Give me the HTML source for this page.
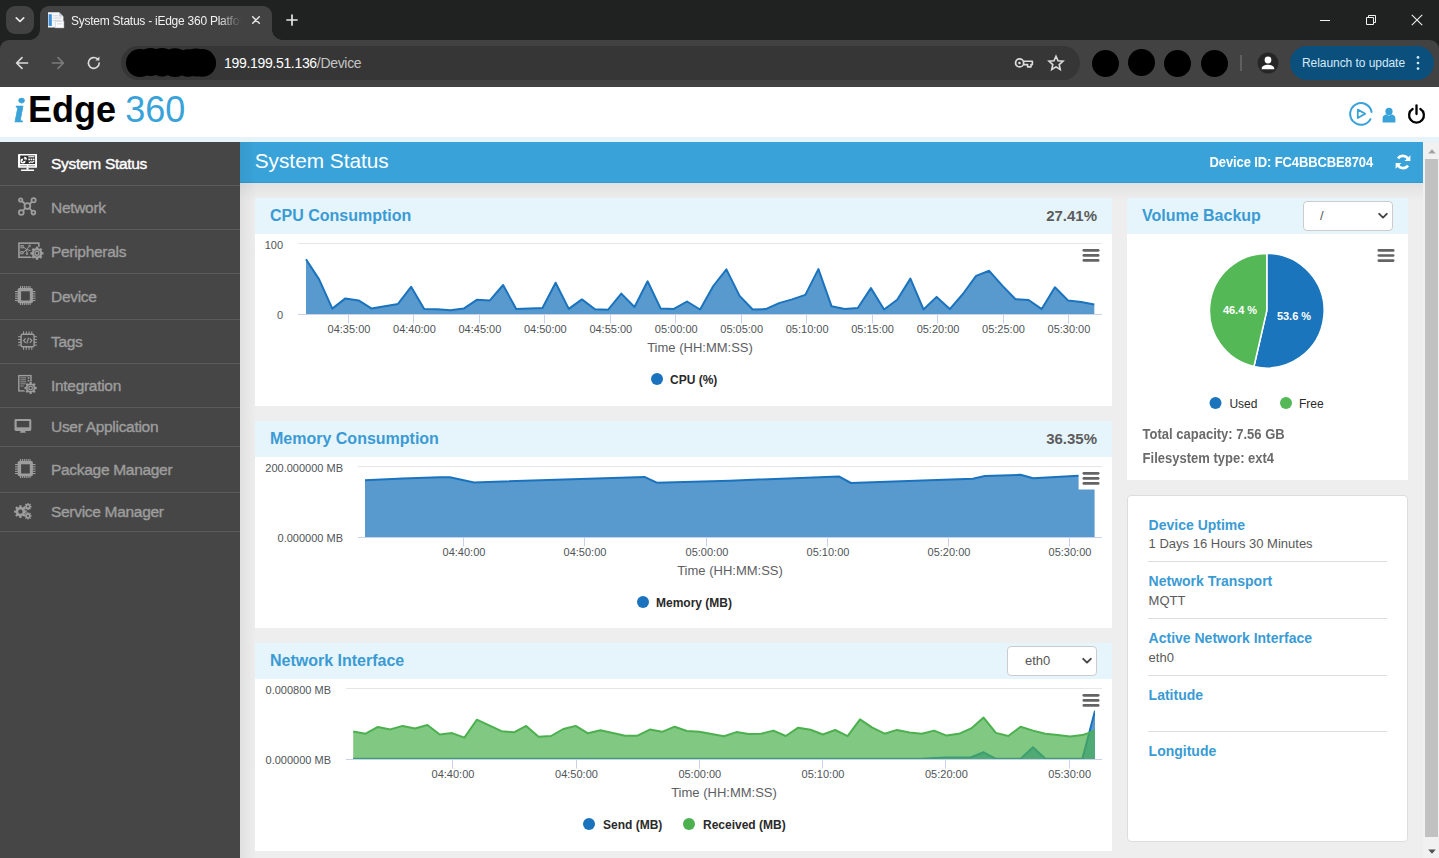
<!DOCTYPE html>
<html lang="en">
<head>
<meta charset="utf-8">
<title>System Status - iEdge 360 Platform</title>
<style>
*{box-sizing:border-box;margin:0;padding:0}
html,body{width:1439px;height:858px;overflow:hidden;background:#eee;font-family:"Liberation Sans",Arial,sans-serif}
.abs{position:absolute}
#root{position:relative;width:1439px;height:858px;overflow:hidden}
/* ---------- browser chrome ---------- */
#tabstrip{left:0;top:0;width:1439px;height:52px;background:#202222}
#toolbar{left:0;top:40px;width:1439px;height:47px;background:#424242;border-radius:9px 9px 0 0}
#tabdd{left:6px;top:6px;width:28px;height:28px;border-radius:9px;background:#424242}
#tab{left:40px;top:6px;width:232px;height:34px;background:#424242;border-radius:9px 9px 0 0}
#tab:before,#tab:after{content:"";position:absolute;bottom:0;width:10px;height:10px}
#tab:before{left:-10px;background:radial-gradient(circle at 0 0,transparent 9.5px,#424242 10px)}
#tab:after{right:-10px;background:radial-gradient(circle at 100% 0,transparent 9.5px,#424242 10px)}
#tabtxt{left:71px;top:13px;width:172px;height:16px;font-size:12px;line-height:16px;color:#f1f1f1;white-space:nowrap;overflow:hidden;letter-spacing:-.25px;-webkit-mask-image:linear-gradient(90deg,#000 148px,transparent 170px);mask-image:linear-gradient(90deg,#000 148px,transparent 170px)}
#omni{left:121px;top:46px;width:959px;height:34px;border-radius:17px;background:#363636}
#blob{left:126px;top:48px;width:90px;height:29px;border-radius:14px;background:#000}
#url{left:224px;top:54px;font-size:14px;line-height:18px;color:#fff;white-space:nowrap;letter-spacing:-.32px}
#url span{color:#c4c4c4}
.dot{width:27px;height:27px;border-radius:50%;background:#000;top:49px}
#relaunch{left:1290px;top:46px;width:144px;height:34px;border-radius:17px;background:#0b507d;color:#d3eafb;letter-spacing:-.06px;font-size:12px;line-height:34px;padding-left:12px;white-space:nowrap}
/* ---------- page ---------- */
#hdr{left:0;top:87px;width:1439px;height:50px;background:#fff}
#strip{left:0;top:137px;width:1439px;height:5px;background:#e6f3fb}
#logo{left:14.4px;top:88.8px;font-size:36px;line-height:42px;white-space:nowrap;color:#000;font-weight:bold}
#logo i{display:inline-block;font-family:"Liberation Serif",serif;font-style:italic;font-weight:bold;color:#39a3d9;font-size:34px;-webkit-text-stroke:.6px #39a3d9;transform:scaleX(1.12);transform-origin:left bottom;margin-right:4.2px}
#logo b{font-weight:normal;color:#39a3d9;margin-left:-.8px}
#side{left:0;top:142px;width:240px;height:716px;background:#464646}
.mi{left:0;width:240px;border-bottom:1px solid #5b5b5b;color:#9d9d9d;font-size:15.5px;letter-spacing:-.3px;white-space:nowrap}
.mi span{position:absolute;left:51px;top:50%;transform:translateY(-50%);line-height:20px;-webkit-text-stroke:.38px currentColor}
.mi.on{color:#fff}
.mi svg{position:absolute}
#main{left:240px;top:142px;width:1183px;height:716px;background:#eee}
#tbar{left:240px;top:142px;width:1183px;height:41px;background:#39a3d9;border-bottom:1px solid #2e9bd6}
#ttl{left:254.7px;top:148px;font-size:20.8px;line-height:26px;color:#fff;white-space:nowrap}
#devid{right:66px;top:155px;transform:scaleY(1.06);transform-origin:0 12.5px;letter-spacing:-.12px;font-size:13px;line-height:16px;font-weight:bold;color:#fff;white-space:nowrap}
.ph{background:#e6f4fc;height:36px}
.pb{background:#fff}
.pt{font-size:16px;font-weight:bold;color:#3a9bd4;line-height:20px;white-space:nowrap}
.pv{margin-top:1px;font-size:15px;font-weight:bold;color:#5c5c5c;line-height:20px;white-space:nowrap;text-align:right}
.sel{background:#fff;border:1px solid #ccc;border-radius:4px;font-size:13px;color:#555;line-height:28px;padding-left:17px}
#sb{left:1423px;top:142px;width:16px;height:716px;background:#f1f1f1}
#sbt{left:1425px;top:159px;width:13px;height:678px;background:#c1c1c1}
svg text{font-family:"Liberation Sans",Arial,sans-serif}
.info{left:1127px;top:495px;width:281px;height:347px;background:#fff;border:1px solid #ddd;border-radius:4px}
.il{left:1148.6px;font-size:14px;font-weight:bold;color:#3a9bd4;line-height:18px;white-space:nowrap}
.iv{left:1148.6px;margin-top:.5px;font-size:13px;color:#5a5a5a;line-height:18px;white-space:nowrap}
.hr{left:1148px;width:239px;height:1px;background:#ddd}
.cap{left:1142.6px;font-size:13px;font-weight:bold;color:#6a6a6a;line-height:16px;white-space:nowrap;transform:scaleY(1.06);transform-origin:0 12.5px}
</style>
</head>
<body>
<div id="root">
<!--CHROME-START-->
<div class="abs" id="tabstrip"></div>
<div class="abs" id="toolbar"></div>
<div class="abs" id="tabdd"><svg class="abs" style="left:9px;top:10px" width="10" height="8" viewBox="0 0 10 8"><path d="M1.3 1.8 L5 5.5 L8.7 1.8" fill="none" stroke="#e8e8e8" stroke-width="1.7" stroke-linecap="round" stroke-linejoin="round"/></svg></div>
<div class="abs" id="tab"></div>
<svg class="abs" style="left:47px;top:11px" width="18" height="18" viewBox="0 0 18 18">
 <path d="M1 1.2 H12 L16.4 5.4 V16.6 H1 Z" fill="#f4f6f8"/>
 <path d="M12 1.2 L16.4 5.4 H12 Z" fill="#c9d2da"/>
 <rect x="1.6" y="3.2" width="3.2" height="11.8" fill="#3f8fd6"/>
 <rect x="6.2" y="4.2" width="5" height="1" fill="#d3dae2"/><rect x="6.2" y="6.6" width="8" height="1" fill="#d3dae2"/><rect x="6.2" y="9" width="8" height="1" fill="#d3dae2"/>
 <rect x="8.6" y="10.4" width="8.2" height="6.4" fill="#fff" stroke="#d0d7de" stroke-width=".7"/>
 <rect x="10" y="12.4" width="5.4" height="1" fill="#d3dae2"/>
</svg>
<div class="abs" id="tabtxt">System Status - iEdge 360 Platform</div>
<svg class="abs" style="left:251px;top:15px" width="10" height="10" viewBox="0 0 10 10"><path d="M1.7 1.7 L8.3 8.3 M8.3 1.7 L1.7 8.3" stroke="#e6e6e6" stroke-width="1.5" stroke-linecap="round"/></svg>
<svg class="abs" style="left:286px;top:14px" width="12" height="12" viewBox="0 0 12 12"><path d="M6 1 V11 M1 6 H11" stroke="#e6e6e6" stroke-width="1.7" stroke-linecap="round"/></svg>
<svg class="abs" style="left:1319px;top:14px" width="12" height="12" viewBox="0 0 12 12"><path d="M1 6.5 H11" stroke="#f0f0f0" stroke-width="1"/></svg>
<svg class="abs" style="left:1365px;top:14px" width="12" height="12" viewBox="0 0 12 12"><path d="M1.5 3.5 H8.5 V10.5 H1.5 Z M3.5 3.5 V1.5 H10.5 V8.5 H8.5" fill="none" stroke="#f0f0f0" stroke-width="1"/></svg>
<svg class="abs" style="left:1411px;top:14px" width="12" height="12" viewBox="0 0 12 12"><path d="M.8 .8 L11.2 11.2 M11.2 .8 L.8 11.2" stroke="#f0f0f0" stroke-width="1.1"/></svg>
<!-- nav buttons -->
<svg class="abs" style="left:15px;top:56px" width="14" height="14" viewBox="0 0 14 14"><path d="M12.6 7 H2 M7 1.6 L1.6 7 L7 12.4" fill="none" stroke="#dcdcdc" stroke-width="1.6" stroke-linecap="round" stroke-linejoin="round"/></svg>
<svg class="abs" style="left:51px;top:56px" width="14" height="14" viewBox="0 0 14 14"><path d="M1.4 7 H12 M7 1.6 L12.4 7 L7 12.4" fill="none" stroke="#7c7c7c" stroke-width="1.6" stroke-linecap="round" stroke-linejoin="round"/></svg>
<svg class="abs" style="left:86px;top:55px" width="16" height="16" viewBox="0 0 16 16"><path d="M13.2 8 A5.4 5.4 0 1 1 11.4 3.9" fill="none" stroke="#dcdcdc" stroke-width="1.6" stroke-linecap="round"/><path d="M13.4 1.6 V5.6 H9.4 Z" fill="#dcdcdc"/></svg>
<div class="abs" id="omni"></div>
<svg class="abs" style="left:124px;top:46px" width="94" height="33" viewBox="124 46 94 33"><g fill="#000"><circle cx="140" cy="63" r="14.1"/><circle cx="150.5" cy="62" r="14.1"/><circle cx="162" cy="62.2" r="14.2"/><circle cx="175" cy="62.6" r="14.3"/><circle cx="188" cy="63" r="13.8"/><circle cx="196" cy="62.6" r="14"/><circle cx="202.3" cy="62.9" r="13.8"/></g></svg>
<div class="abs" id="url">199.199.51.136<span>/Device</span></div>
<svg class="abs" style="left:1014px;top:56px" width="21" height="14" viewBox="0 0 21 14"><circle cx="5.6" cy="6.9" r="4.05" fill="none" stroke="#dcdcdc" stroke-width="1.7"/><circle cx="5.5" cy="6.9" r="1.25" fill="#dcdcdc"/><path d="M9.8 5.2 H18.4 V8.6 H17 V10.9 H13.6 V8.6 H9.8" fill="none" stroke="#dcdcdc" stroke-width="1.6" stroke-linejoin="round"/></svg>
<svg class="abs" style="left:1047px;top:53.8px" width="18" height="18" viewBox="0 0 18 18"><path d="M9 2.2 L11 6.8 L16 7.25 L12.2 10.6 L13.3 15.5 L9 12.9 L4.7 15.5 L5.8 10.6 L2 7.25 L7 6.8 Z" fill="none" stroke="#dcdcdc" stroke-width="1.6" stroke-linejoin="miter"/></svg>
<div class="abs dot" style="left:1092px;top:50.2px"></div><div class="abs dot" style="left:1128px;top:48.8px"></div><div class="abs dot" style="left:1164px;top:50.2px"></div><div class="abs dot" style="left:1201px;top:50.2px"></div>
<div class="abs" style="left:1240px;top:55px;width:2px;height:16px;background:#5f5f5f"></div>
<svg class="abs" style="left:1257px;top:52px" width="22" height="22" viewBox="0 0 22 22"><circle cx="11" cy="11" r="10.5" fill="#262626"/><circle cx="11" cy="8" r="3.4" fill="#fff"/><path d="M4.7 16.4 C4.7 11.6 17.3 11.6 17.3 16.4 V17.3 H4.7 Z" fill="#fff"/></svg>
<div class="abs" id="relaunch">Relaunch to update</div>
<svg class="abs" style="left:1416px;top:55px" width="4" height="16" viewBox="0 0 4 16"><circle cx="2" cy="2.4" r="1.35" fill="#d3eafb"/><circle cx="2" cy="8" r="1.35" fill="#d3eafb"/><circle cx="2" cy="13.6" r="1.35" fill="#d3eafb"/></svg>
<!--CHROME-END-->
<!--PAGE-START-->
<div class="abs" id="hdr"></div>
<div class="abs" id="strip"></div>
<div class="abs" id="logo"><i>i</i>Edge <b>360</b></div>
<!-- header icons -->
<svg class="abs" style="left:1348px;top:101px" width="26" height="26" viewBox="0 0 26 26"><path d="M22.4 18.2 A10.8 10.8 0 1 1 23.6 11" fill="none" stroke="#39a3d9" stroke-width="2" stroke-linecap="round"/><path d="M9.8 8.6 V17 L17.2 12.8 Z" fill="none" stroke="#39a3d9" stroke-width="1.8" stroke-linejoin="round"/></svg>
<svg class="abs" style="left:1382px;top:107px" width="14" height="16" viewBox="0 0 14 16"><circle cx="7" cy="4.4" r="3.6" fill="#39a3d9"/><path d="M.6 15.4 V11.6 C.6 8 4 7.6 4.6 7.6 C6 8.8 8 8.8 9.4 7.6 C10 7.6 13.4 8 13.4 11.6 V15.4 Z" fill="#39a3d9"/></svg>
<svg class="abs" style="left:1407px;top:104px" width="19" height="20" viewBox="0 0 19 20"><path d="M5.6 5 A7.4 7.4 0 1 0 13.4 5" fill="none" stroke="#000" stroke-width="2.3" stroke-linecap="round"/><path d="M9.5 1.4 V10" stroke="#000" stroke-width="2.3" stroke-linecap="round"/></svg>
<!-- sidebar -->
<div class="abs" id="side"></div>
<!--MENU-START-->
<div class="abs mi on" style="top:142px;height:44px"><span>System Status</span></div>
<div class="abs mi" style="top:186px;height:44px"><span>Network</span></div>
<div class="abs mi" style="top:230px;height:44px"><span>Peripherals</span></div>
<div class="abs mi" style="top:274px;height:46px"><span>Device</span></div>
<div class="abs mi" style="top:320px;height:44px"><span>Tags</span></div>
<div class="abs mi" style="top:364px;height:44px"><span>Integration</span></div>
<div class="abs mi" style="top:408px;height:39px"><span>User Application</span></div>
<div class="abs mi" style="top:447px;height:46px"><span>Package Manager</span></div>
<div class="abs mi" style="top:493px;height:39px"><span>Service Manager</span></div>
<svg class="abs" style="left:17.9px;top:153.8px" width="19.4" height="17.2" viewBox="0 0 19.4 17.2"><rect x="0" y="0" width="19.2" height="13.7" rx=".7" fill="#fff"/><rect x="2.2" y="1.5" width="14.9" height="8.5" fill="#303030"/><rect x="2.2" y="11.5" width="6.7" height=".7" fill="#6a6a6a"/><rect x="10.3" y="11.5" width="6.8" height=".7" fill="#6a6a6a"/><circle cx="5" cy="7" r="2.5" fill="#fff"/><path d="M5 7 L5 4.5 A2.5 2.5 0 0 1 7.5 7 Z" fill="#303030"/><path d="M6.2 5.6 V2.7 A2.8 2.8 0 0 1 9 5.6 Z" fill="#fff"/><circle cx="4.7" cy="7.3" r=".9" fill="#555"/><rect x="10.3" y="2.2" width="6.2" height="1.1" fill="#fff"/><rect x="10.3" y="4.6" width="1.7" height="1.7" fill="#fff"/><rect x="12.55" y="4.6" width="1.7" height="1.7" fill="#fff"/><rect x="14.8" y="4.6" width="1.7" height="1.7" fill="#fff"/><path d="M10.8 8.9 L12.4 7.8 L14 8.3 L16.3 7.2" fill="none" stroke="#fff" stroke-width="1.2"/><rect x="8.5" y="13.6" width="2.1" height="2" fill="#fff"/><rect x="2.9" y="15.4" width="13.3" height="1.6" rx=".7" fill="#fff"/></svg>
<svg class="abs" style="left:16px;top:196px" width="23" height="22" viewBox="16 196 23 22"><g fill="none" stroke="#9d9d9d" stroke-width="1.8"><circle cx="27.4" cy="206.1" r="2.9"/><circle cx="20.7" cy="200" r="1.7"/><circle cx="33.6" cy="200.3" r="2.1"/><circle cx="21.3" cy="212.5" r="2.4"/><circle cx="33.4" cy="212.6" r="1.9"/><path d="M22.3 201.5 L25.2 204 M31.8 202 L29.6 204 M23.3 210.4 L25.3 208.2 M31.9 211 L29.6 208.2"/></g></svg>
<svg class="abs" style="left:17px;top:241px" width="28" height="21" viewBox="17 241 28 21"><rect x="18.95" y="243.15" width="19.9" height="14.1" fill="none" stroke="#9d9d9d" stroke-width="1.6"/><g fill="none" stroke="#9d9d9d" stroke-width="1"><rect x="21" y="245.6" width="2.2" height="2.2"/><rect x="20.8" y="251.6" width="2.2" height="2.2"/><circle cx="29.6" cy="245.8" r=".9"/><circle cx="27" cy="253.8" r=".9"/><path d="M23.2 246.8 L26.6 249.6 L29 246.4 M23 252.6 L26.6 249.6 L27 253 M26.6 249.6 L30.6 250.6"/></g><circle cx="37" cy="253.3" r="6.9" fill="#464646"/><path d="M42.05 252.05 L43.50 252.18 L43.50 254.42 L42.05 254.55 L41.45 255.98 L42.39 257.11 L40.81 258.69 L39.68 257.75 L38.25 258.35 L38.12 259.80 L35.88 259.80 L35.75 258.35 L34.32 257.75 L33.19 258.69 L31.61 257.11 L32.55 255.98 L31.95 254.55 L30.50 254.42 L30.50 252.18 L31.95 252.05 L32.55 250.62 L31.61 249.49 L33.19 247.91 L34.32 248.85 L35.75 248.25 L35.88 246.80 L38.12 246.80 L38.25 248.25 L39.68 248.85 L40.81 247.91 L42.39 249.49 L41.45 250.62 Z M33.90 253.30 a3.10 3.10 0 1 0 6.20 0 a3.10 3.10 0 1 0 -6.20 0 Z" fill="#9d9d9d" fill-rule="evenodd"/><circle cx="37" cy="253.3" r="1.9" fill="none" stroke="#9d9d9d" stroke-width="1.4"/></svg>
<svg class="abs" style="left:15px;top:285.7px" width="20.5" height="19.2" viewBox="0 0 20.5 19.2"><g fill="#9d9d9d"><rect x="0" y="5.00" width="20.5" height="1.1"/><rect x="0" y="7.25" width="20.5" height="1.1"/><rect x="0" y="9.50" width="20.5" height="1.1"/><rect x="0" y="11.75" width="20.5" height="1.1"/><rect x="0" y="14.00" width="20.5" height="1.1"/><rect x="5.00" y="0" width="1.05" height="19.2"/><rect x="6.90" y="0" width="1.05" height="19.2"/><rect x="8.80" y="0" width="1.05" height="19.2"/><rect x="10.70" y="0" width="1.05" height="19.2"/><rect x="12.60" y="0" width="1.05" height="19.2"/><rect x="14.50" y="0" width="1.05" height="19.2"/><rect x="2.7" y="2" width="15.2" height="15.2" rx="1.6"/></g><rect x="6.1" y="5.3" width="8.7" height="9.2" fill="#464646"/></svg>
<svg class="abs" style="left:17px;top:330px" width="21" height="21" viewBox="17 330 21 21"><g fill="#9d9d9d"><rect x="18.1" y="336.20" width="18.8" height="1.05"/><rect x="23.00" y="331.4" width="1.05" height="18.4"/><rect x="18.1" y="339.00" width="18.8" height="1.05"/><rect x="25.75" y="331.4" width="1.05" height="18.4"/><rect x="18.1" y="341.80" width="18.8" height="1.05"/><rect x="28.50" y="331.4" width="1.05" height="18.4"/><rect x="18.1" y="344.60" width="18.8" height="1.05"/><rect x="31.25" y="331.4" width="1.05" height="18.4"/></g><rect x="21.1" y="334.3" width="13" height="12.5" rx="1.6" fill="#464646" stroke="#9d9d9d" stroke-width="1.4"/><path d="M25.6 338.4 L23.6 340.6 L25.6 342.8 M29.8 338.4 L31.8 340.6 L29.8 342.8 M28.6 337.8 L26.8 343.4" fill="none" stroke="#9d9d9d" stroke-width="1.2"/></svg>
<svg class="abs" style="left:17px;top:374px" width="22" height="22" viewBox="17 374 22 22"><rect x="18.8" y="375.6" width="12.2" height="15.3" fill="none" stroke="#9d9d9d" stroke-width="1.4"/><g fill="#9d9d9d"><rect x="20.4" y="377.4" width="5.6" height=".9"/><rect x="20.4" y="379.4" width="5.6" height=".9"/><rect x="20.4" y="381.4" width="5.6" height=".9"/><rect x="20.4" y="383.4" width="5.6" height=".9"/><rect x="20.4" y="385.6" width="3.2" height=".9"/><rect x="27.6" y="377.2" width="1.8" height="1.6"/><rect x="27.6" y="380" width="1.8" height="1.6"/></g><circle cx="30.6" cy="388" r="6.6" fill="#464646"/><path d="M35.16 386.87 L36.71 386.95 L36.71 389.05 L35.16 389.13 L34.63 390.42 L35.66 391.58 L34.18 393.06 L33.02 392.03 L31.73 392.56 L31.65 394.11 L29.55 394.11 L29.47 392.56 L28.18 392.03 L27.02 393.06 L25.54 391.58 L26.57 390.42 L26.04 389.13 L24.49 389.05 L24.49 386.95 L26.04 386.87 L26.57 385.58 L25.54 384.42 L27.02 382.94 L28.18 383.97 L29.47 383.44 L29.55 381.89 L31.65 381.89 L31.73 383.44 L33.02 383.97 L34.18 382.94 L35.66 384.42 L34.63 385.58 Z M27.60 388.00 a3.00 3.00 0 1 0 6.00 0 a3.00 3.00 0 1 0 -6.00 0 Z" fill="#9d9d9d" fill-rule="evenodd"/><circle cx="30.6" cy="388" r="1.8" fill="none" stroke="#9d9d9d" stroke-width="1.3"/></svg>
<svg class="abs" style="left:14px;top:418px" width="18" height="16" viewBox="14 418 18 16"><rect x="14.5" y="419" width="16.8" height="11.9" rx="1.4" fill="#9d9d9d"/><rect x="16.7" y="421" width="12.5" height="6.3" fill="#464646"/><path d="M20.6 430.8 H25.2 L25.8 432.8 H20 Z" fill="#9d9d9d"/></svg>
<svg class="abs" style="left:15px;top:458.8px" width="20.5" height="19.2" viewBox="0 0 20.5 19.2"><g fill="#9d9d9d"><rect x="0" y="5.00" width="20.5" height="1.1"/><rect x="0" y="7.25" width="20.5" height="1.1"/><rect x="0" y="9.50" width="20.5" height="1.1"/><rect x="0" y="11.75" width="20.5" height="1.1"/><rect x="0" y="14.00" width="20.5" height="1.1"/><rect x="5.00" y="0" width="1.05" height="19.2"/><rect x="6.90" y="0" width="1.05" height="19.2"/><rect x="8.80" y="0" width="1.05" height="19.2"/><rect x="10.70" y="0" width="1.05" height="19.2"/><rect x="12.60" y="0" width="1.05" height="19.2"/><rect x="14.50" y="0" width="1.05" height="19.2"/><rect x="2.7" y="2" width="15.2" height="15.2" rx="1.6"/></g><rect x="6.1" y="5.3" width="8.7" height="9.2" fill="#464646"/></svg>
<svg class="abs" style="left:13px;top:502px" width="20" height="20" viewBox="13 502 20 20"><path d="M25.05 510.41 L26.70 510.48 L26.70 512.72 L25.05 512.79 L24.53 514.04 L25.65 515.26 L24.06 516.85 L22.84 515.73 L21.59 516.25 L21.52 517.90 L19.28 517.90 L19.21 516.25 L17.96 515.73 L16.74 516.85 L15.15 515.26 L16.27 514.04 L15.75 512.79 L14.10 512.72 L14.10 510.48 L15.75 510.41 L16.27 509.16 L15.15 507.94 L16.74 506.35 L17.96 507.47 L19.21 506.95 L19.28 505.30 L21.52 505.30 L21.59 506.95 L22.84 507.47 L24.06 506.35 L25.65 507.94 L24.53 509.16 Z M18.20 511.60 a2.20 2.20 0 1 0 4.40 0 a2.20 2.20 0 1 0 -4.40 0 Z" fill="#9d9d9d" fill-rule="evenodd"/><path d="M30.62 505.93 L31.64 505.95 L31.64 507.25 L30.62 507.27 L30.32 507.97 L31.03 508.72 L30.12 509.63 L29.37 508.92 L28.67 509.22 L28.65 510.24 L27.35 510.24 L27.33 509.22 L26.63 508.92 L25.88 509.63 L24.97 508.72 L25.68 507.97 L25.38 507.27 L24.36 507.25 L24.36 505.95 L25.38 505.93 L25.68 505.23 L24.97 504.48 L25.88 503.57 L26.63 504.28 L27.33 503.98 L27.35 502.96 L28.65 502.96 L28.67 503.98 L29.37 504.28 L30.12 503.57 L31.03 504.48 L30.32 505.23 Z M27.00 506.60 a1.00 1.00 0 1 0 2.00 0 a1.00 1.00 0 1 0 -2.00 0 Z" fill="#9d9d9d" fill-rule="evenodd"/><path d="M30.62 515.23 L31.64 515.25 L31.64 516.55 L30.62 516.57 L30.32 517.27 L31.03 518.02 L30.12 518.93 L29.37 518.22 L28.67 518.52 L28.65 519.54 L27.35 519.54 L27.33 518.52 L26.63 518.22 L25.88 518.93 L24.97 518.02 L25.68 517.27 L25.38 516.57 L24.36 516.55 L24.36 515.25 L25.38 515.23 L25.68 514.53 L24.97 513.78 L25.88 512.87 L26.63 513.58 L27.33 513.28 L27.35 512.26 L28.65 512.26 L28.67 513.28 L29.37 513.58 L30.12 512.87 L31.03 513.78 L30.32 514.53 Z M27.00 515.90 a1.00 1.00 0 1 0 2.00 0 a1.00 1.00 0 1 0 -2.00 0 Z" fill="#9d9d9d" fill-rule="evenodd"/></svg>
<!--MENU-END-->
<!-- main -->
<div class="abs" id="main"></div>
<div class="abs" style="left:240px;top:183px;width:1183px;height:18px;background:linear-gradient(#e2e2e2,#e7e7e7 40%,#ebebeb 75%,#eee)"></div>
<div class="abs" id="tbar"></div>
<div class="abs" style="left:240px;top:142px;width:17px;height:716px;background:linear-gradient(90deg,rgba(0,0,0,.06),rgba(0,0,0,.03) 45%,rgba(0,0,0,0))"></div>
<div class="abs" id="ttl">System Status</div>
<div class="abs" id="devid">Device ID: FC4BBCBE8704</div>
<svg class="abs" style="left:1395px;top:154px" width="16" height="16" viewBox="0 0 16 16"><path d="M13.6 6.2 A6 6 0 0 0 3 4.4" fill="none" stroke="#fff" stroke-width="2.7"/><path d="M2.4 9.8 A6 6 0 0 0 13 11.6" fill="none" stroke="#fff" stroke-width="2.7"/><path d="M15.4 1.2 V7 H9.6 Z" fill="#fff"/><path d="M.6 14.8 V9 H6.4 Z" fill="#fff"/></svg>
<!-- scrollbar -->
<div class="abs" id="sb"></div><div class="abs" id="sbt"></div>
<svg class="abs" style="left:1427.5px;top:149px" width="8" height="5" viewBox="0 0 8 5"><path d="M4 .3 L7.8 4.6 H.2 Z" fill="#a3a3a3"/></svg>
<svg class="abs" style="left:1427.5px;top:848.6px" width="8" height="5" viewBox="0 0 8 5"><path d="M4 4.7 L7.8 .4 H.2 Z" fill="#505050"/></svg>
<!-- panel 1 -->
<div class="abs ph" style="left:255px;top:198px;width:857px"></div>
<div class="abs pb" style="left:255px;top:234px;width:857px;height:172px"></div>
<div class="abs pt" style="left:270px;top:206px">CPU Consumption</div>
<div class="abs pv" style="left:997px;width:100px;top:205px">27.41%</div>
<!--CHART1-START-->
<svg class="abs" style="left:255px;top:234px" width="857" height="172" viewBox="255 234 857 172"><path d="M298 243.5 H1102" stroke="#e6e6e6" stroke-width="1"/><path d="M298 314.5 H1102" stroke="#c9d2ec" stroke-width="1"/><path d="M348.5 315 V323.5 M413.5 315 V323.5 M479.5 315 V323.5 M544.5 315 V323.5 M610.5 315 V323.5 M675.5 315 V323.5 M741.5 315 V323.5 M806.5 315 V323.5 M872.5 315 V323.5 M937.5 315 V323.5 M1003.5 315 V323.5 M1068.5 315 V323.5" stroke="#c9d2ec" stroke-width="1"/><path d="M306.0 314.0 L306.0 259.3 L319.1 279.4 L332.3 308.6 L345.4 298.4 L358.6 300.4 L371.7 308.6 L384.8 306.2 L398.0 303.9 L411.1 286.8 L424.2 309.1 L437.4 309.3 L450.5 310.3 L463.7 308.6 L476.8 299.8 L489.9 300.4 L503.1 285.0 L516.2 309.1 L529.4 308.6 L542.5 308.0 L555.6 282.7 L568.8 308.9 L581.9 299.4 L595.0 309.3 L608.2 309.7 L621.3 293.6 L634.5 307.0 L647.6 281.3 L660.7 308.6 L673.9 308.9 L687.0 301.5 L700.1 309.5 L713.3 286.0 L726.4 269.4 L739.6 295.9 L752.7 309.5 L765.8 309.1 L779.0 303.1 L792.1 299.4 L805.3 294.9 L818.4 269.1 L831.5 306.2 L844.7 308.9 L857.8 308.0 L870.9 288.1 L884.1 309.5 L897.2 299.8 L910.4 278.6 L923.5 309.5 L936.6 296.9 L949.8 309.1 L962.9 294.0 L976.1 275.9 L989.2 270.8 L1002.3 285.6 L1015.5 299.2 L1028.6 300.0 L1041.7 309.1 L1054.9 287.3 L1068.0 300.4 L1081.2 302.1 L1094.3 304.5 L1094.3 314.0 Z" fill="#1b75bc" fill-opacity="0.73"/><polyline points="306.0,259.3 319.1,279.4 332.3,308.6 345.4,298.4 358.6,300.4 371.7,308.6 384.8,306.2 398.0,303.9 411.1,286.8 424.2,309.1 437.4,309.3 450.5,310.3 463.7,308.6 476.8,299.8 489.9,300.4 503.1,285.0 516.2,309.1 529.4,308.6 542.5,308.0 555.6,282.7 568.8,308.9 581.9,299.4 595.0,309.3 608.2,309.7 621.3,293.6 634.5,307.0 647.6,281.3 660.7,308.6 673.9,308.9 687.0,301.5 700.1,309.5 713.3,286.0 726.4,269.4 739.6,295.9 752.7,309.5 765.8,309.1 779.0,303.1 792.1,299.4 805.3,294.9 818.4,269.1 831.5,306.2 844.7,308.9 857.8,308.0 870.9,288.1 884.1,309.5 897.2,299.8 910.4,278.6 923.5,309.5 936.6,296.9 949.8,309.1 962.9,294.0 976.1,275.9 989.2,270.8 1002.3,285.6 1015.5,299.2 1028.6,300.0 1041.7,309.1 1054.9,287.3 1068.0,300.4 1081.2,302.1 1094.3,304.5" fill="none" stroke="#1b73bd" stroke-width="2" stroke-linejoin="round" stroke-linecap="butt"/><text x="283" y="249" font-size="11" text-anchor="end" fill="#4f5457" font-weight="normal">100</text><text x="283" y="319" font-size="11" text-anchor="end" fill="#4f5457" font-weight="normal">0</text><text x="349" y="333" font-size="11" text-anchor="middle" fill="#4f5457" font-weight="normal">04:35:00</text><text x="414.45" y="333" font-size="11" text-anchor="middle" fill="#4f5457" font-weight="normal">04:40:00</text><text x="479.9" y="333" font-size="11" text-anchor="middle" fill="#4f5457" font-weight="normal">04:45:00</text><text x="545.35" y="333" font-size="11" text-anchor="middle" fill="#4f5457" font-weight="normal">04:50:00</text><text x="610.8" y="333" font-size="11" text-anchor="middle" fill="#4f5457" font-weight="normal">04:55:00</text><text x="676.25" y="333" font-size="11" text-anchor="middle" fill="#4f5457" font-weight="normal">05:00:00</text><text x="741.7" y="333" font-size="11" text-anchor="middle" fill="#4f5457" font-weight="normal">05:05:00</text><text x="807.15" y="333" font-size="11" text-anchor="middle" fill="#4f5457" font-weight="normal">05:10:00</text><text x="872.6" y="333" font-size="11" text-anchor="middle" fill="#4f5457" font-weight="normal">05:15:00</text><text x="938.05" y="333" font-size="11" text-anchor="middle" fill="#4f5457" font-weight="normal">05:20:00</text><text x="1003.5" y="333" font-size="11" text-anchor="middle" fill="#4f5457" font-weight="normal">05:25:00</text><text x="1068.95" y="333" font-size="11" text-anchor="middle" fill="#4f5457" font-weight="normal">05:30:00</text><text x="700" y="352" font-size="13" text-anchor="middle" fill="#5c6063" font-weight="normal">Time (HH:MM:SS)</text><circle cx="657" cy="379" r="6" fill="#1b73bd"/><text x="670" y="384" font-size="12" text-anchor="start" fill="#2a2a2a" font-weight="bold">CPU (%)</text><g fill="#646464"><rect x="1082.5" y="249" width="17" height="2.7" rx="1.35"/><rect x="1082.5" y="254.05" width="17" height="2.7" rx="1.35"/><rect x="1082.5" y="259.1" width="17" height="2.7" rx="1.35"/></g></svg>
<!--CHART1-END-->
<!-- panel 2 -->
<div class="abs ph" style="left:255px;top:420.5px;width:857px"></div>
<div class="abs pb" style="left:255px;top:456.5px;width:857px;height:171.5px"></div>
<div class="abs pt" style="left:270px;top:429px">Memory Consumption</div>
<div class="abs pv" style="left:997px;width:100px;top:428px">36.35%</div>
<!--CHART2-START-->
<svg class="abs" style="left:255px;top:456px" width="857" height="172" viewBox="255 456 857 172"><path d="M358 466.5 H1102" stroke="#e6e6e6" stroke-width="1"/><path d="M358 537.5 H1102" stroke="#c9d2ec" stroke-width="1"/><path d="M463.5 538 V546.5 M584.5 538 V546.5 M706.5 538 V546.5 M827.5 538 V546.5 M948.5 538 V546.5 M1069.5 538 V546.5" stroke="#c9d2ec" stroke-width="1"/><path d="M365.0 537.0 L365.0 480.3 L402.8 478.5 L439.8 477.2 L449.8 477.2 L474.1 482.4 L644.4 476.9 L656.8 482.7 L730.0 480.7 L838.8 476.4 L850.9 483.0 L972.9 478.7 L984.8 476.1 L1020.5 474.8 L1033.1 478.2 L1078.6 475.8 L1094.6 475.3 L1094.6 537.0 Z" fill="#1b75bc" fill-opacity="0.73"/><polyline points="365.0,480.3 402.8,478.5 439.8,477.2 449.8,477.2 474.1,482.4 644.4,476.9 656.8,482.7 730.0,480.7 838.8,476.4 850.9,483.0 972.9,478.7 984.8,476.1 1020.5,474.8 1033.1,478.2 1078.6,475.8 1094.6,475.3" fill="none" stroke="#1b73bd" stroke-width="2" stroke-linejoin="round" stroke-linecap="butt"/><rect x="1078.6" y="469" width="24" height="20.5" fill="#fff"/><text x="343" y="471.5" font-size="11" text-anchor="end" fill="#4f5457" font-weight="normal">200.000000 MB</text><text x="343" y="541.5" font-size="11" text-anchor="end" fill="#4f5457" font-weight="normal">0.000000 MB</text><text x="464" y="556" font-size="11" text-anchor="middle" fill="#4f5457" font-weight="normal">04:40:00</text><text x="585" y="556" font-size="11" text-anchor="middle" fill="#4f5457" font-weight="normal">04:50:00</text><text x="707" y="556" font-size="11" text-anchor="middle" fill="#4f5457" font-weight="normal">05:00:00</text><text x="828" y="556" font-size="11" text-anchor="middle" fill="#4f5457" font-weight="normal">05:10:00</text><text x="949" y="556" font-size="11" text-anchor="middle" fill="#4f5457" font-weight="normal">05:20:00</text><text x="1070" y="556" font-size="11" text-anchor="middle" fill="#4f5457" font-weight="normal">05:30:00</text><text x="730" y="575" font-size="13" text-anchor="middle" fill="#5c6063" font-weight="normal">Time (HH:MM:SS)</text><circle cx="643" cy="602" r="6" fill="#1b73bd"/><text x="656" y="607" font-size="12" text-anchor="start" fill="#2a2a2a" font-weight="bold">Memory (MB)</text><g fill="#646464"><rect x="1082.5" y="472" width="17" height="2.7" rx="1.35"/><rect x="1082.5" y="477.05" width="17" height="2.7" rx="1.35"/><rect x="1082.5" y="482.1" width="17" height="2.7" rx="1.35"/></g></svg>
<!--CHART2-END-->
<!-- panel 3 -->
<div class="abs ph" style="left:255px;top:643px;width:857px"></div>
<div class="abs pb" style="left:255px;top:679px;width:857px;height:172px"></div>
<div class="abs pt" style="left:270px;top:651px">Network Interface</div>
<div class="abs sel" style="left:1007px;top:646px;width:90px;height:30px">eth0</div>
<svg class="abs" style="left:1081.8px;top:657.4px" width="10" height="8" viewBox="0 0 10 8"><path d="M1.2 1.8 L5 5.6 L8.8 1.8" fill="none" stroke="#444" stroke-width="1.9" stroke-linecap="round" stroke-linejoin="round"/></svg>
<!--CHART3-START-->
<svg class="abs" style="left:255px;top:679px" width="857" height="172" viewBox="255 679 857 172"><path d="M346 688.5 H1102" stroke="#e6e6e6" stroke-width="1"/><path d="M346 759.5 H1102" stroke="#c9d2ec" stroke-width="1"/><path d="M452.5 760 V768.5 M576.5 760 V768.5 M699.5 760 V768.5 M822.5 760 V768.5 M945.5 760 V768.5 M1069.5 760 V768.5" stroke="#c9d2ec" stroke-width="1"/><clipPath id="cl3"><rect x="346" y="680" width="748.9" height="79"/></clipPath><g clip-path="url(#cl3)"><path d="M353.2 759.0 L353.2 758.8 L365.6 758.8 L377.9 758.8 L390.3 758.8 L402.6 758.8 L415.0 758.8 L427.4 758.8 L439.7 758.8 L452.1 758.8 L464.4 758.8 L476.8 758.8 L489.2 758.8 L501.5 758.8 L513.9 758.8 L526.2 758.8 L538.6 758.8 L551.0 758.8 L563.3 758.8 L575.7 758.8 L588.0 758.8 L600.4 758.8 L612.8 758.8 L625.1 758.8 L637.5 758.8 L649.8 758.8 L662.2 758.8 L674.6 758.8 L686.9 758.8 L699.3 758.8 L711.6 758.8 L724.0 758.8 L736.4 758.8 L748.7 758.8 L761.1 758.8 L773.4 758.8 L785.8 758.8 L798.2 758.8 L810.5 758.8 L822.9 758.8 L835.2 758.8 L847.6 758.8 L860.0 758.8 L872.3 758.8 L884.7 758.8 L897.0 758.8 L909.4 758.8 L921.8 758.8 L934.1 757.9 L946.5 757.6 L958.8 757.4 L971.2 757.3 L983.6 752.3 L995.9 758.8 L1008.3 758.8 L1020.6 758.8 L1033.0 747.2 L1045.4 758.8 L1057.7 758.8 L1070.1 758.8 L1082.4 758.8 L1094.8 711.6 L1098.0 711.6 L1098.0 759.0 Z" fill="#1b75bc" fill-opacity="0.73"/><polyline points="353.2,758.8 365.6,758.8 377.9,758.8 390.3,758.8 402.6,758.8 415.0,758.8 427.4,758.8 439.7,758.8 452.1,758.8 464.4,758.8 476.8,758.8 489.2,758.8 501.5,758.8 513.9,758.8 526.2,758.8 538.6,758.8 551.0,758.8 563.3,758.8 575.7,758.8 588.0,758.8 600.4,758.8 612.8,758.8 625.1,758.8 637.5,758.8 649.8,758.8 662.2,758.8 674.6,758.8 686.9,758.8 699.3,758.8 711.6,758.8 724.0,758.8 736.4,758.8 748.7,758.8 761.1,758.8 773.4,758.8 785.8,758.8 798.2,758.8 810.5,758.8 822.9,758.8 835.2,758.8 847.6,758.8 860.0,758.8 872.3,758.8 884.7,758.8 897.0,758.8 909.4,758.8 921.8,758.8 934.1,757.9 946.5,757.6 958.8,757.4 971.2,757.3 983.6,752.3 995.9,758.8 1008.3,758.8 1020.6,758.8 1033.0,747.2 1045.4,758.8 1057.7,758.8 1070.1,758.8 1082.4,758.8 1094.8,711.6 1098.0,711.6" fill="none" stroke="#1b73bd" stroke-width="2" stroke-linejoin="round" stroke-linecap="butt"/><path d="M353.2 759.0 L353.2 731.6 L365.6 733.7 L377.9 726.9 L390.3 729.4 L402.6 725.9 L415.0 728.5 L427.4 725.0 L439.7 734.5 L452.1 733.1 L464.4 737.6 L476.8 719.7 L489.2 725.3 L501.5 731.2 L513.9 732.3 L526.2 725.9 L538.6 736.8 L551.0 736.0 L563.3 729.0 L575.7 725.9 L588.0 733.3 L600.4 730.2 L612.8 732.9 L625.1 735.7 L637.5 735.7 L649.8 729.6 L662.2 731.8 L674.6 726.7 L686.9 731.0 L699.3 731.8 L711.6 734.1 L724.0 736.2 L736.4 732.1 L748.7 734.1 L761.1 733.7 L773.4 730.6 L785.8 736.0 L798.2 727.7 L810.5 729.8 L822.9 734.5 L835.2 730.0 L847.6 736.2 L860.0 719.4 L872.3 727.7 L884.7 733.7 L897.0 729.9 L909.4 732.6 L921.8 733.7 L934.1 730.6 L946.5 735.6 L958.8 733.8 L971.2 728.4 L983.6 717.6 L995.9 732.9 L1008.3 736.0 L1020.6 726.8 L1033.0 730.6 L1045.4 733.8 L1057.7 734.9 L1070.1 736.4 L1082.4 735.1 L1094.8 730.9 L1094.8 759.0 Z" fill="#4cb04f" fill-opacity="0.7"/><polyline points="353.2,731.6 365.6,733.7 377.9,726.9 390.3,729.4 402.6,725.9 415.0,728.5 427.4,725.0 439.7,734.5 452.1,733.1 464.4,737.6 476.8,719.7 489.2,725.3 501.5,731.2 513.9,732.3 526.2,725.9 538.6,736.8 551.0,736.0 563.3,729.0 575.7,725.9 588.0,733.3 600.4,730.2 612.8,732.9 625.1,735.7 637.5,735.7 649.8,729.6 662.2,731.8 674.6,726.7 686.9,731.0 699.3,731.8 711.6,734.1 724.0,736.2 736.4,732.1 748.7,734.1 761.1,733.7 773.4,730.6 785.8,736.0 798.2,727.7 810.5,729.8 822.9,734.5 835.2,730.0 847.6,736.2 860.0,719.4 872.3,727.7 884.7,733.7 897.0,729.9 909.4,732.6 921.8,733.7 934.1,730.6 946.5,735.6 958.8,733.8 971.2,728.4 983.6,717.6 995.9,732.9 1008.3,736.0 1020.6,726.8 1033.0,730.6 1045.4,733.8 1057.7,734.9 1070.1,736.4 1082.4,735.1 1094.8,730.9" fill="none" stroke="#4cb04f" stroke-width="2" stroke-linejoin="round" stroke-linecap="butt"/></g><text x="331" y="693.5" font-size="11" text-anchor="end" fill="#4f5457" font-weight="normal">0.000800 MB</text><text x="331" y="763.5" font-size="11" text-anchor="end" fill="#4f5457" font-weight="normal">0.000000 MB</text><text x="453" y="778" font-size="11" text-anchor="middle" fill="#4f5457" font-weight="normal">04:40:00</text><text x="576.5" y="778" font-size="11" text-anchor="middle" fill="#4f5457" font-weight="normal">04:50:00</text><text x="699.8" y="778" font-size="11" text-anchor="middle" fill="#4f5457" font-weight="normal">05:00:00</text><text x="823" y="778" font-size="11" text-anchor="middle" fill="#4f5457" font-weight="normal">05:10:00</text><text x="946.4" y="778" font-size="11" text-anchor="middle" fill="#4f5457" font-weight="normal">05:20:00</text><text x="1069.7" y="778" font-size="11" text-anchor="middle" fill="#4f5457" font-weight="normal">05:30:00</text><text x="724" y="797" font-size="13" text-anchor="middle" fill="#5c6063" font-weight="normal">Time (HH:MM:SS)</text><circle cx="589" cy="824" r="6" fill="#1b73bd"/><text x="603" y="829" font-size="12" text-anchor="start" fill="#2a2a2a" font-weight="bold">Send (MB)</text><circle cx="689" cy="824" r="6" fill="#4cb04f"/><text x="703" y="829" font-size="12" text-anchor="start" fill="#2a2a2a" font-weight="bold">Received (MB)</text><g fill="#646464"><rect x="1082.5" y="694" width="17" height="2.7" rx="1.35"/><rect x="1082.5" y="699.05" width="17" height="2.7" rx="1.35"/><rect x="1082.5" y="704.1" width="17" height="2.7" rx="1.35"/></g></svg>
<!--CHART3-END-->
<!-- volume backup -->
<div class="abs ph" style="left:1127px;top:198px;width:281px"></div>
<div class="abs pb" style="left:1127px;top:234px;width:281px;height:246px"></div>
<div class="abs pt" style="left:1142px;top:206px">Volume Backup</div>
<div class="abs sel" style="left:1303px;top:201px;width:89.5px;height:30px;padding-left:16px">/</div>
<svg class="abs" style="left:1377.7px;top:212.4px" width="10" height="8" viewBox="0 0 10 8"><path d="M1.2 1.8 L5 5.6 L8.8 1.8" fill="none" stroke="#444" stroke-width="1.9" stroke-linecap="round" stroke-linejoin="round"/></svg>
<!--PIE-START-->
<svg class="abs" style="left:1127px;top:234px" width="281" height="190" viewBox="1127 234 281 190"><path d="M1266.8 310.7 L1266.8 253.4 A57.3 57.3 0 1 1 1253.95 366.54 Z" fill="#1b75bc" stroke="#fff" stroke-width="1.5" stroke-linejoin="round"/><path d="M1266.8 310.7 L1253.95 366.54 A57.3 57.3 0 0 1 1266.8 253.4 Z" fill="#54b857" stroke="#fff" stroke-width="1.5" stroke-linejoin="round"/><text x="1294" y="320" font-size="11" text-anchor="middle" fill="#fff" font-weight="bold">53.6 %</text><text x="1240" y="314" font-size="11" text-anchor="middle" fill="#fff" font-weight="bold">46.4 %</text><circle cx="1215.5" cy="403" r="6" fill="#1b75bc"/><text x="1229.4" y="408" font-size="12" text-anchor="start" fill="#2a2a2a" font-weight="normal">Used</text><circle cx="1286" cy="403" r="6" fill="#54b857"/><text x="1299" y="408" font-size="12" text-anchor="start" fill="#2a2a2a" font-weight="normal">Free</text><g fill="#646464"><rect x="1377.5" y="249.1" width="17" height="2.7" rx="1.35"/><rect x="1377.5" y="254.15" width="17" height="2.7" rx="1.35"/><rect x="1377.5" y="259.2" width="17" height="2.7" rx="1.35"/></g></svg>
<!--PIE-END-->
<div class="abs cap" style="top:427px">Total capacity: 7.56 GB</div>
<div class="abs cap" style="top:451px">Filesystem type: ext4</div>
<!-- info -->
<div class="abs info"></div>
<div class="abs il" style="top:516px">Device Uptime</div>
<div class="abs iv" style="top:534px">1 Days 16 Hours 30 Minutes</div>
<div class="abs hr" style="top:561px"></div>
<div class="abs il" style="top:572px">Network Transport</div>
<div class="abs iv" style="top:591px">MQTT</div>
<div class="abs hr" style="top:618px"></div>
<div class="abs il" style="top:629px">Active Network Interface</div>
<div class="abs iv" style="top:648px">eth0</div>
<div class="abs hr" style="top:675px"></div>
<div class="abs il" style="top:686px">Latitude</div>
<div class="abs hr" style="top:731px"></div>
<div class="abs il" style="top:742px">Longitude</div>
<!--PAGE-END-->
</div>
</body>
</html>
